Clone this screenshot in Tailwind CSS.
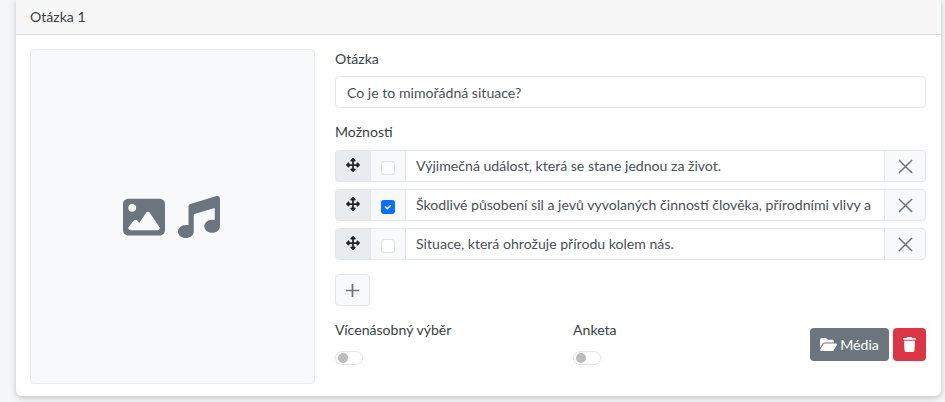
<!DOCTYPE html>
<html lang="cs">
<head>
<meta charset="utf-8">
<script src="https://cdn.jsdelivr.net/npm/@tailwindcss/browser@4"></script>
<title>Otázka</title>
</head>
<body class="bg-[#f6f7f8] h-[402px] overflow-hidden font-['Lato','Noto_Sans',sans-serif] text-[14.1px] text-[#3a3f45]">
<div class="ml-4 mr-1 h-[397px] -mt-px bg-white rounded-b-md shadow-[0_2px_6px_rgba(0,0,0,0.22)] flex flex-col">
  <div class="h-[36px] shrink-0 bg-[#f7f7f7] border-b border-[#dcdcdc] px-3.5 flex items-center pt-px">Otázka 1</div>
  <div class="flex-1 flex px-3.5 pt-3.5 pb-[13px] gap-5">
    <div class="w-[285px] h-[335px] bg-[#f8f9fa] border border-[#e9ecef] rounded flex items-center justify-center gap-[13px] pr-[2px]">
      <svg class="w-[42px] h-[42px] fill-[#6c757d]" viewBox="0 0 512 512"><path d="M0 96C0 60.7 28.7 32 64 32H448c35.3 0 64 28.7 64 64V416c0 35.3-28.7 64-64 64H64c-35.3 0-64-28.7-64-64V96zM323.8 202.5c-4.5-6.6-11.9-10.5-19.8-10.5s-15.4 3.9-19.8 10.5l-87 127.6L170.7 297c-4.6-5.7-11.5-9-18.7-9s-14.2 3.3-18.7 9l-64 80c-5.8 7.2-6.9 17.1-2.9 25.4s12.4 13.6 21.6 13.6h96 32H424c8.9 0 17.1-4.9 21.2-12.8s3.6-17.4-1.4-24.7l-120-176zM112 192a48 48 0 1 0 0-96 48 48 0 1 0 0 96z"/></svg>
      <svg class="w-[42px] h-[42px] fill-[#6c757d]" viewBox="0 0 512 512"><path d="M499.1 6.3c8.1 6 12.9 15.6 12.9 25.7v72V368c0 44.2-43 80-96 80s-96-35.8-96-80s43-80 96-80c11.2 0 22 1.6 32 4.6V147L192 223.8V432c0 44.2-43 80-96 80s-96-35.8-96-80s43-80 96-80c11.2 0 22 1.6 32 4.6V200 128c0-14.1 9.3-26.6 22.8-30.7l320-96c9.7-2.9 20.2-1.1 28.3 5z"/></svg>
    </div>
    <div class="w-[591px] flex flex-col">
      <label class="h-[20px] leading-[20px]">Otázka</label>
      <input class="mt-[7px] h-[32px] w-full border border-[#e3e6ea] rounded px-[11px] outline-none text-[#495057]" value="Co je to mimořádná situace?">
      <label class="mt-[14px] h-[20px] leading-[20px]">Možnosti</label>
      <div class="mt-2 flex flex-col gap-[7px]">
        <div class="flex h-[32px]">
          <span class="w-[36px] bg-[#e9ecef] border border-[#e3e6ea] rounded-l flex items-center justify-center"><svg class="w-[14px] h-[14px] fill-[#212529] -mt-[2px]" viewBox="0 0 512 512"><path d="M278.6 9.4c-12.5-12.5-32.8-12.5-45.3 0l-64 64c-9.2 9.2-11.9 22.9-6.9 34.9s16.6 19.8 29.6 19.8h32v96H128V192c0-12.9-7.8-24.6-19.8-29.6s-25.7-2.2-34.9 6.9l-64 64c-12.5 12.5-12.5 32.8 0 45.3l64 64c9.2 9.2 22.9 11.9 34.9 6.9s19.8-16.6 19.8-29.6V288h96v96H192c-12.9 0-24.6 7.8-29.6 19.8s-2.2 25.7 6.9 34.9l64 64c12.5 12.5 32.8 12.5 45.3 0l64-64c9.2-9.2 11.9-22.9 6.9-34.9s-16.6-19.8-29.6-19.8H288V288h96v32c0 12.9 7.8 24.6 19.8 29.6s25.7 2.2 34.9-6.9l64-64c12.5-12.5 12.5-32.8 0-45.3l-64-64c-9.2-9.2-22.9-11.9-34.9-6.9s-19.8 16.6-19.8 29.6v32H288V128h32c12.9 0 24.6-7.8 29.6-19.8s2.2-25.7-6.9-34.9l-64-64z"/></svg></span>
          <span class="w-[35px] bg-[#f8f9fa] border-y border-r border-[#e3e6ea] flex items-center justify-center"><span class="w-[14px] h-[14px] bg-white border border-[#dee2e6] rounded-[3px] mt-[3px]"></span></span>
          <input class="flex-1 min-w-0 border-y border-[#e3e6ea] px-[10px] outline-none text-[#495057]" value="Výjimečná událost, která se stane jednou za život.">
          <span class="w-[42px] bg-[#f8f9fa] border border-[#e3e6ea] rounded-r flex items-center justify-center"><svg class="w-[15px] h-[15px] stroke-[#6c757d] stroke-[1.6]" viewBox="0 0 16 16" fill="none"><path d="M1 1l14 14M15 1L1 15"/></svg></span>
        </div>
        <div class="flex h-[32px]">
          <span class="w-[36px] bg-[#e9ecef] border border-[#e3e6ea] rounded-l flex items-center justify-center"><svg class="w-[14px] h-[14px] fill-[#212529] -mt-[2px]" viewBox="0 0 512 512"><path d="M278.6 9.4c-12.5-12.5-32.8-12.5-45.3 0l-64 64c-9.2 9.2-11.9 22.9-6.9 34.9s16.6 19.8 29.6 19.8h32v96H128V192c0-12.9-7.8-24.6-19.8-29.6s-25.7-2.2-34.9 6.9l-64 64c-12.5 12.5-12.5 32.8 0 45.3l64 64c9.2 9.2 22.9 11.9 34.9 6.9s19.8-16.6 19.8-29.6V288h96v96H192c-12.9 0-24.6 7.8-29.6 19.8s-2.2 25.7 6.9 34.9l64 64c12.5 12.5 32.8 12.5 45.3 0l64-64c9.2-9.2 11.9-22.9 6.9-34.9s-16.6-19.8-29.6-19.8H288V288h96v32c0 12.9 7.8 24.6 19.8 29.6s25.7 2.2 34.9-6.9l64-64c12.5-12.5 12.5-32.8 0-45.3l-64-64c-9.2-9.2-22.9-11.9-34.9-6.9s-19.8 16.6-19.8 29.6v32H288V128h32c12.9 0 24.6-7.8 29.6-19.8s2.2-25.7-6.9-34.9l-64-64z"/></svg></span>
          <span class="w-[35px] bg-[#f8f9fa] border-y border-r border-[#e3e6ea] flex items-center justify-center"><span class="w-[14px] h-[14px] bg-[#0d6efd] rounded-[3px] mt-[3px] flex items-center justify-center"><svg class="w-[10px] h-[10px] stroke-white stroke-[3]" viewBox="0 0 20 20" fill="none"><path d="M5 10l3.5 3.5L15 7" stroke-linecap="round" stroke-linejoin="round"/></svg></span></span>
          <input class="flex-1 min-w-0 border-y border-[#e3e6ea] px-[10px] outline-none text-[#495057]" value="Škodlivé působení sil a jevů vyvolaných činností člověka, přírodními vlivy a také havárie">
          <span class="w-[42px] bg-[#f8f9fa] border border-[#e3e6ea] rounded-r flex items-center justify-center"><svg class="w-[15px] h-[15px] stroke-[#6c757d] stroke-[1.6]" viewBox="0 0 16 16" fill="none"><path d="M1 1l14 14M15 1L1 15"/></svg></span>
        </div>
        <div class="flex h-[32px]">
          <span class="w-[36px] bg-[#e9ecef] border border-[#e3e6ea] rounded-l flex items-center justify-center"><svg class="w-[14px] h-[14px] fill-[#212529] -mt-[2px]" viewBox="0 0 512 512"><path d="M278.6 9.4c-12.5-12.5-32.8-12.5-45.3 0l-64 64c-9.2 9.2-11.9 22.9-6.9 34.9s16.6 19.8 29.6 19.8h32v96H128V192c0-12.9-7.8-24.6-19.8-29.6s-25.7-2.2-34.9 6.9l-64 64c-12.5 12.5-12.5 32.8 0 45.3l64 64c9.2 9.2 22.9 11.9 34.9 6.9s19.8-16.6 19.8-29.6V288h96v96H192c-12.9 0-24.6 7.8-29.6 19.8s-2.2 25.7 6.9 34.9l64 64c12.5 12.5 32.8 12.5 45.3 0l64-64c9.2-9.2 11.9-22.9 6.9-34.9s-16.6-19.8-29.6-19.8H288V288h96v32c0 12.9 7.8 24.6 19.8 29.6s25.7 2.2 34.9-6.9l64-64c12.5-12.5 12.5-32.8 0-45.3l-64-64c-9.2-9.2-22.9-11.9-34.9-6.9s-19.8 16.6-19.8 29.6v32H288V128h32c12.9 0 24.6-7.8 29.6-19.8s2.2-25.7-6.9-34.9l-64-64z"/></svg></span>
          <span class="w-[35px] bg-[#f8f9fa] border-y border-r border-[#e3e6ea] flex items-center justify-center"><span class="w-[14px] h-[14px] bg-white border border-[#dee2e6] rounded-[3px] mt-[3px]"></span></span>
          <input class="flex-1 min-w-0 border-y border-[#e3e6ea] px-[10px] outline-none text-[#495057]" value="Situace, která ohrožuje přírodu kolem nás.">
          <span class="w-[42px] bg-[#f8f9fa] border border-[#e3e6ea] rounded-r flex items-center justify-center"><svg class="w-[15px] h-[15px] stroke-[#6c757d] stroke-[1.6]" viewBox="0 0 16 16" fill="none"><path d="M1 1l14 14M15 1L1 15"/></svg></span>
        </div>
      </div>
      <button class="mt-[14px] w-[35px] h-[32px] bg-[#f8f9fa] border border-[#e3e6ea] rounded flex items-center justify-center"><svg class="w-[13px] h-[13px] stroke-[#6c757d] stroke-[1.6]" viewBox="0 0 12 12" fill="none"><path d="M6 0v12M0 6h12"/></svg></button>
      <div class="mt-[14px] flex items-start">
        <div class="w-[238px] flex flex-col">
          <span class="h-[20px] leading-[20px]">Vícenásobný výběr</span>
          <span class="mt-[11px] w-[28px] h-[14px] border border-[#e3e6ea] rounded-full flex items-center pl-[2px]"><span class="w-[10px] h-[10px] bg-[#bdbdbd] rounded-full"></span></span>
        </div>
        <div class="flex flex-col">
          <span class="h-[20px] leading-[20px]">Anketa</span>
          <span class="mt-[11px] w-[28px] h-[14px] border border-[#e3e6ea] rounded-full flex items-center pl-[2px]"><span class="w-[10px] h-[10px] bg-[#bdbdbd] rounded-full"></span></span>
        </div>
        <div class="ml-auto flex gap-1 mt-[8px]">
          <button class="w-[79px] h-[33px] bg-[#6c757d] text-white rounded flex items-center justify-center gap-[3px]"><svg class="w-[17px] h-[15px] fill-white" viewBox="0 0 576 512"><path d="M88.7 223.8L0 375.8V96C0 60.7 28.7 32 64 32H181.5c17 0 33.3 6.7 45.3 18.7l26.5 26.5c12 12 28.3 18.7 45.3 18.7H416c35.3 0 64 28.7 64 64v32H144c-22.8 0-43.8 12.1-55.3 31.8zm27.6 16.1C122.1 230 132.6 224 144 224H544c11.5 0 22 6.1 27.7 16.1s5.7 22.2-.1 32.1l-112 192C453.9 474 443.4 480 432 480H32c-11.5 0-22-6.1-27.7-16.1s-5.7-22.2 .1-32.1l112-192z"/></svg>Média</button>
          <button class="w-[33px] h-[33px] bg-[#dc3545] rounded flex items-center justify-center"><svg class="w-[13px] h-[15px] fill-white" viewBox="0 0 448 512"><path d="M135.2 17.7L128 32H32C14.3 32 0 46.3 0 64S14.3 96 32 96H416c17.7 0 32-14.3 32-32s-14.3-32-32-32H320l-7.2-14.3C307.4 6.8 296.3 0 284.2 0H163.8c-12.1 0-23.2 6.8-28.6 17.7zM416 128H32L53.2 467c1.6 25.3 22.6 45 47.9 45H346.9c25.3 0 46.3-19.7 47.9-45L416 128z"/></svg></button>
        </div>
      </div>
    </div>
  </div>
</div>
</body>
</html>
